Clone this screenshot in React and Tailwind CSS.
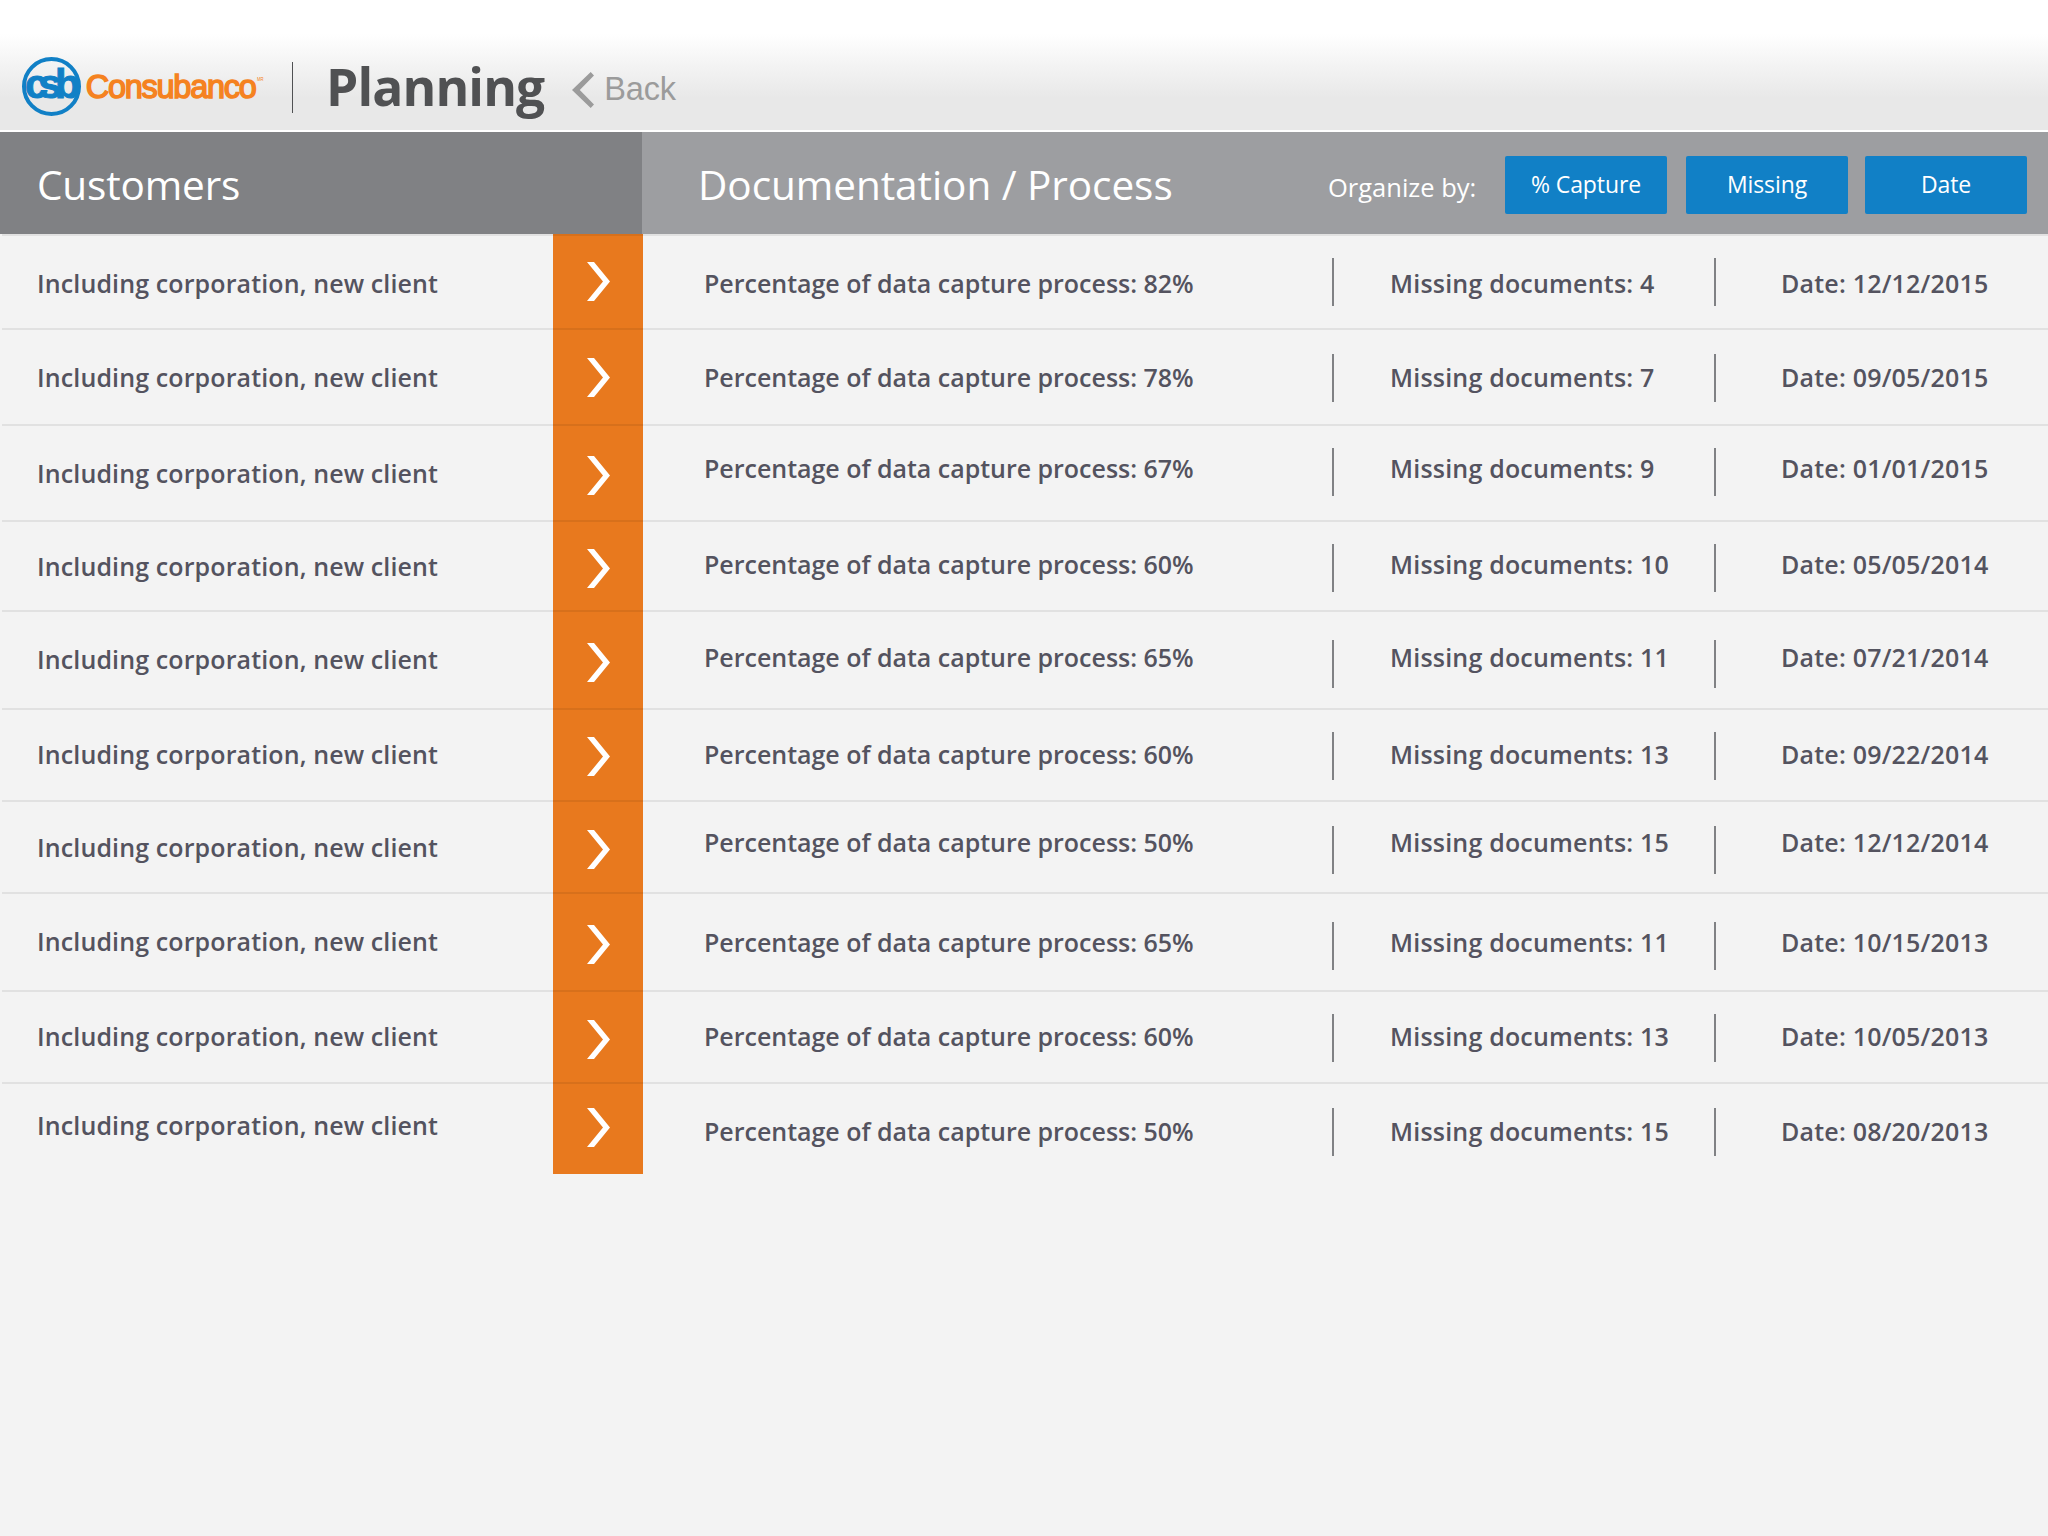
const CLIENT = 'Including corporation, new client';

const ROWS = [
  { capture: 82, missing: 4, date: '12/12/2015', row: 'h-[94px]', name: 'mt-[34px]', info: 'mt-[34px]', rule: 'mt-6', arrow: 'mt-7' },
  { capture: 78, missing: 7, date: '09/05/2015', row: 'h-24', name: 'mt-[34px]', info: 'mt-[34px]', rule: 'mt-[26px]', arrow: 'mt-[30px]' },
  { capture: 67, missing: 9, date: '01/01/2015', row: 'h-24', name: 'mt-[34px]', info: 'mt-[29px]', rule: 'mt-6', arrow: 'mt-8' },
  { capture: 60, missing: 10, date: '05/05/2014', row: 'h-[90px]', name: 'mt-[31px]', info: 'mt-[29px]', rule: 'mt-6', arrow: 'mt-[29px]' },
  { capture: 65, missing: 11, date: '07/21/2014', row: 'h-[98px]', name: 'mt-[34px]', info: 'mt-8', rule: 'mt-[30px]', arrow: 'mt-[33px]' },
  { capture: 60, missing: 13, date: '09/22/2014', row: 'h-[92px]', name: 'mt-[31px]', info: 'mt-[31px]', rule: 'mt-6', arrow: 'mt-[29px]' },
  { capture: 50, missing: 15, date: '12/12/2014', row: 'h-[92px]', name: 'mt-8', info: 'mt-[27px]', rule: 'mt-[26px]', arrow: 'mt-[30px]' },
  { capture: 65, missing: 11, date: '10/15/2013', row: 'h-[98px]', name: 'mt-[34px]', info: 'mt-[35px]', rule: 'mt-[30px]', arrow: 'mt-[33px]' },
  { capture: 60, missing: 13, date: '10/05/2013', row: 'h-[92px]', name: 'mt-[31px]', info: 'mt-[31px]', rule: 'mt-6', arrow: 'mt-[30px]' },
  { capture: 50, missing: 15, date: '08/20/2013', row: 'h-[92px]', name: 'mt-7', info: 'mt-[34px]', rule: 'mt-[26px]', arrow: 'mt-[26px]' },
];

function Logo() {
  return (
    <svg className="mt-[57px] h-[59px] w-[243px] shrink-0" viewBox="0 0 243 59" aria-label="csb Consubanco">
      <circle cx="29.5" cy="29.5" r="27.5" fill="none" stroke="#1180c6" strokeWidth="4" />
      <text x="3 16.5 33" y="40.7" fontFamily="Liberation Sans, sans-serif" fontWeight="700" fontSize="41.5" fill="#1180c6" stroke="#1180c6" strokeWidth="1">
        csb
      </text>
      <text x="63.8" y="41.4" textLength="171" lengthAdjust="spacing" fontFamily="Liberation Sans, sans-serif" fontSize="32.5" fill="#f58220" stroke="#f58220" strokeWidth="1.5">
        Consubanco
      </text>
      <text x="235" y="24" textLength="6.5" lengthAdjust="spacingAndGlyphs" fontFamily="Liberation Sans, sans-serif" fontSize="5" fill="#f58220">
        MR
      </text>
    </svg>
  );
}

function Header() {
  return (
    <header className="flex h-[132px] items-start border-b-2 border-white bg-[linear-gradient(to_bottom,#ffffff_0px,#ffffff_34px,#f3f3f3_66px,#e8e8e8_98px,#e8e8e8_130px)] pl-[22px]">
      <Logo />
      <div className="mt-[62px] ml-[27px] h-[51px] w-px bg-[#505153]" />
      <h1 className="mt-[54px] ml-[33px] text-[51.5px] leading-[64px] font-bold tracking-[-0.9px] text-[#505153]">Planning</h1>
      <a className="flex">
        <svg className="mt-[72px] ml-7 h-9 w-[22px]" viewBox="0 0 22 36" fill="#9b9b9b">
          <path d="M0 18 18.7 0 22 3.4 7.8 18 22 32.6 18.7 36Z" />
        </svg>
        <span className="mt-[70px] ml-[10px] font-['Liberation_Sans',sans-serif] text-[32.5px] leading-[38px] tracking-[-0.2px] text-[#9b9b9b]">Back</span>
      </a>
    </header>
  );
}

function SortButton({ children }) {
  return (
    <button className="flex h-[58px] w-[162px] justify-center rounded-xs bg-[#1180c6] pt-3 text-[23px] leading-[32px] tracking-[-0.1px] text-white">
      {children}
    </button>
  );
}

function ColumnBar() {
  return (
    <div className="flex h-[102px] items-start text-white">
      <div className="h-full w-[642px] bg-[#808184] pt-[26px] pl-[37px] text-[40.5px] leading-[54px] tracking-[-0.15px]">Customers</div>
      <div className="flex h-full flex-1 items-start bg-[#9d9ea1] pl-14">
        <h2 className="w-[630px] pt-[26px] text-[40.5px] leading-[54px] tracking-[-0.05px]">Documentation / Process</h2>
        <span className="w-[177px] pt-[38px] text-[25.5px] leading-[34px]">Organize by:</span>
        <div className="flex pt-6">
          <SortButton>% Capture</SortButton>
          <div className="w-[19px]" />
          <SortButton>Missing</SortButton>
          <div className="w-[17px]" />
          <SortButton>Date</SortButton>
        </div>
      </div>
    </div>
  );
}

function Rule({ offset }) {
  return <div className={`${offset} h-12 w-0.5 shrink-0 bg-[#808184]`} />;
}

function Row({ item }) {
  return (
    <li className={`${item.row} relative flex items-start text-[25px] leading-[30px] font-semibold whitespace-nowrap text-[#54535f]`}>
      <div className="w-[553px] shrink-0 pl-[37px]">
        <div className={`${item.name} tracking-[0.12px]`}>{CLIENT}</div>
      </div>
      <div className="flex h-full w-[90px] shrink-0 items-start bg-[#e8791e] pl-[34px]">
        <svg className={`${item.arrow} h-[39px] w-[23px]`} viewBox="0 0 23 39" fill="#ffffff">
          <path d="M0 0H7L23 19.5 7 39H0L16 19.5Z" />
        </svg>
      </div>
      <div className={`${item.info} ml-[61px] w-[628px] shrink-0 tracking-[-0.02px]`}>Percentage of data capture process: {item.capture}%</div>
      <Rule offset={item.rule} />
      <div className={`${item.info} ml-14 w-[324px] shrink-0 tracking-[0.2px]`}>Missing documents: {item.missing}</div>
      <Rule offset={item.rule} />
      <div className={`${item.info} ml-[65px] tracking-[0.2px]`}>Date: {item.date}</div>
      <div className="absolute top-0 right-0 left-0.5 h-0.5 bg-black/7" />
    </li>
  );
}

export default function App() {
  return (
    <div className="h-[1536px] w-[2048px] overflow-hidden bg-[#f3f3f3] font-['Open_Sans',sans-serif]">
      <Header />
      <ColumnBar />
      <ul>
        {ROWS.map((item) => (
          <Row key={item.date} item={item} />
        ))}
      </ul>
    </div>
  );
}
